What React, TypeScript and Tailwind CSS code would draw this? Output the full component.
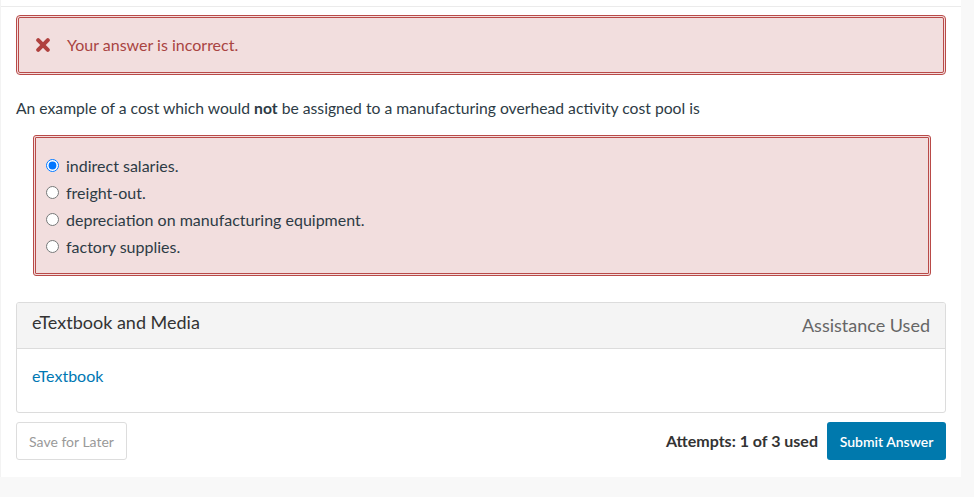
import React, { useState } from 'react';

const options = [
    'indirect salaries.',
    'freight-out.',
    'depreciation on manufacturing equipment.',
    'factory supplies.',
];

const App: React.FC = () => {
    const [selected, setSelected] = useState(0);

    return (
        <div className="w-[974px] h-[497px] bg-[#f8f8f8] font-['Lato','Liberation_Sans',sans-serif] text-[#2d3b45]">
            <div className="w-[961px] h-[477px] bg-white border-l border-[#f3f3f3] flex flex-col">
                <div className="h-[7px] border-b border-[#ebebeb] shrink-0"></div>

                <div className="px-[15px] pt-[8px]">
                    {/* feedback */}
                    <div className="h-[60px] border-[3px] border-double border-[#b94a48] rounded-[4px] bg-[#f2dede] flex items-center pl-[17px]">
                        <svg width="14" height="14" viewBox="0 0 14 14" className="shrink-0">
                            <path d="M2.2 2.2 L11.8 11.8 M11.8 2.2 L2.2 11.8" stroke="#b0413e" strokeWidth="4" strokeLinecap="round" />
                        </svg>
                        <span className="ml-[17px] text-[16px] text-[#a94442]">Your answer is incorrect.</span>
                    </div>

                    <p className="mt-[23px] text-[15.7px] leading-[21px]">
                        An example of a cost which would <b className="font-bold">not</b> be assigned to a manufacturing overhead activity cost pool is
                    </p>

                    {/* choices */}
                    <div className="mt-[16px] ml-[17px] mr-[15px] h-[141px] border-[3px] border-double border-[#b94a48] rounded-[3px] bg-[#f2dede] pt-[14px] pl-[10px]">
                        {options.map((opt, i) => (
                            <label key={i} className="flex items-center h-[27px] text-[16px] cursor-pointer">
                                <input
                                    type="radio"
                                    name="answer"
                                    checked={selected === i}
                                    onChange={() => setSelected(i)}
                                    className="w-[13px] h-[13px] m-0"
                                />
                                <span className="ml-[7px]">{opt}</span>
                            </label>
                        ))}
                    </div>

                    {/* eTextbook panel */}
                    <div className="mt-[26px] h-[111px] border border-[#dcdcdc] rounded-[3px] flex flex-col overflow-hidden">
                        <div className="h-[46px] bg-[#f4f4f4] border-b border-[#dcdcdc] flex items-center justify-between px-[15px] shrink-0">
                            <span className="text-[18px] text-[#333] pb-[6px]">eTextbook and Media</span>
                            <span className="text-[18px] text-[#666]">Assistance Used</span>
                        </div>
                        <div className="px-[15px] pt-[15px]">
                            <a href="#" className="text-[16px] text-[#0077b3]">eTextbook</a>
                        </div>
                    </div>

                    {/* actions */}
                    <div className="mt-[9px] flex items-center justify-between">
                        <button className="h-[38px] w-[111px] border border-[#ddd] rounded-[3px] text-[14px] text-[#999] bg-white">
                            Save for Later
                        </button>
                        <div className="flex items-center">
                            <span className="text-[16px] font-bold text-[#333]">Attempts: 1 of 3 used</span>
                            <button className="ml-[9px] h-[38px] w-[119px] rounded-[3px] bg-[#0079ad] text-white text-[14px] font-semibold">
                                Submit Answer
                            </button>
                        </div>
                    </div>
                </div>
            </div>
        </div>
    );
};

export default App;
